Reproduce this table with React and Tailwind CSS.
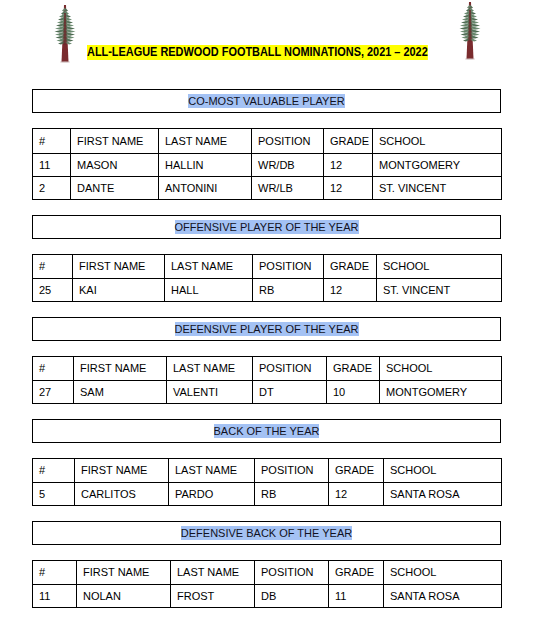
import React from "react";

function Tree() {
  const branches = [];
  const rows = [
    [3, 3], [6, 4], [9, 6], [12, 7], [15, 8], [18, 9], [21, 10], [24, 10.5], [27, 10], [30, 9.5], [33, 8.5], [36, 7],
  ];
  rows.forEach(([y, w], i) => {
    branches.push(
      <path key={"l" + i} d={`M12 ${y} L${12 - w} ${y + 2.5} L${12 - w * 0.6} ${y + 3.5} L12 ${y + 2}Z`} fill={i % 2 ? "#4e6b52" : "#6d8c72"} />
    );
    branches.push(
      <path key={"r" + i} d={`M12 ${y} L${12 + w} ${y + 2.5} L${12 + w * 0.6} ${y + 3.5} L12 ${y + 2}Z`} fill={i % 2 ? "#6d8c72" : "#4e6b52"} />
    );
  });
  return (
    <svg width="24" height="58" viewBox="0 0 24 58">
      <polygon points="11,0 13,0 15.5,57 8.5,57" fill="#7a2b2e" />
      {branches}
      <path d="M12 2 L9 10 L7 20 L6 30 L8 38 L12 36 L16 38 L18 30 L17 20 L15 10Z" fill="#5d7b62" opacity="0.55" />
      <polygon points="11.2,8 12.8,8 13.6,40 10.4,40" fill="#6b2a2c" opacity="0.8" />
      <ellipse cx="12" cy="57" rx="5" ry="1" fill="#c9b8b8" opacity="0.6" />
    </svg>
  );
}

const tables = [
  {
    title: "CO-MOST VALUABLE PLAYER",
    cols: [38, 88, 93, 72, 49, 129],
    head: 25,
    rows: [
      ["11", "MASON", "HALLIN", "WR/DB", "12", "MONTGOMERY"],
      ["2", "DANTE", "ANTONINI", "WR/LB", "12", "ST. VINCENT"],
    ],
  },
  {
    title: "OFFENSIVE PLAYER OF THE YEAR",
    cols: [40, 92, 88, 71, 53, 125],
    head: 24,
    rows: [["25", "KAI", "HALL", "RB", "12", "ST. VINCENT"]],
  },
  {
    title: "DEFENSIVE PLAYER OF THE YEAR",
    cols: [41, 93, 86, 74, 53, 122],
    head: 24,
    rows: [["27", "SAM", "VALENTI", "DT", "10", "MONTGOMERY"]],
  },
  {
    title: "BACK OF THE YEAR",
    cols: [42, 94, 86, 74, 55, 118],
    head: 24,
    rows: [["5", "CARLITOS", "PARDO", "RB", "12", "SANTA ROSA"]],
  },
  {
    title: "DEFENSIVE BACK OF THE YEAR",
    cols: [44, 94, 84, 74, 55, 118],
    head: 24,
    rows: [["11", "NOLAN", "FROST", "DB", "11", "SANTA ROSA"]],
  },
];

const header = ["#", "FIRST NAME", "LAST NAME", "POSITION", "GRADE", "SCHOOL"];

function Section({ t, first }) {
  return (
    <div className={first ? "" : "mt-[15px]"}>
      <div className="w-[469px] h-[24px] border border-black flex items-center justify-center">
        <span className="bg-[#a4c2f4] text-[#111122] text-[11px] leading-[14px]">{t.title}</span>
      </div>
      <div
        className="mt-[15px] w-[470px] grid border-t border-l border-black"
        style={{ gridTemplateColumns: t.cols.map((c) => c + "px").join(" ") }}
      >
        {header.map((h, i) => (
          <div key={"h" + i} className="border-r border-b border-black flex items-center pl-[6px] text-[11px] text-black" style={{ height: t.head }}>
            {h}
          </div>
        ))}
        {t.rows.map((r, ri) =>
          r.map((c, ci) => (
            <div key={ri + "-" + ci} className="h-[23px] border-r border-b border-black flex items-center pl-[6px] text-[11px] text-black">
              {c}
            </div>
          ))
        )}
      </div>
    </div>
  );
}

export default function App() {
  return (
    <div className="w-[535px] h-[637px] bg-white overflow-hidden" style={{ fontFamily: '"Liberation Sans", Arial, sans-serif' }}>
      <div className="h-[89px] flex items-start pl-[53px]">
        <div className="mt-[5px]">
          <Tree />
        </div>
        <div className="ml-[10px] mt-[45px] w-[346px] flex">
          <span className="block w-max origin-left scale-x-[0.874] bg-[#ffff00] font-bold text-[12.5px] leading-[15px] text-black whitespace-nowrap">
            ALL-LEAGUE REDWOOD FOOTBALL NOMINATIONS, 2021 – 2022
          </span>
        </div>
        <div className="ml-[25px] mt-[2px]">
          <Tree />
        </div>
      </div>
      <div className="pl-[32px]">
        {tables.map((t, i) => (
          <Section key={i} t={t} first={i === 0} />
        ))}
      </div>
    </div>
  );
}
